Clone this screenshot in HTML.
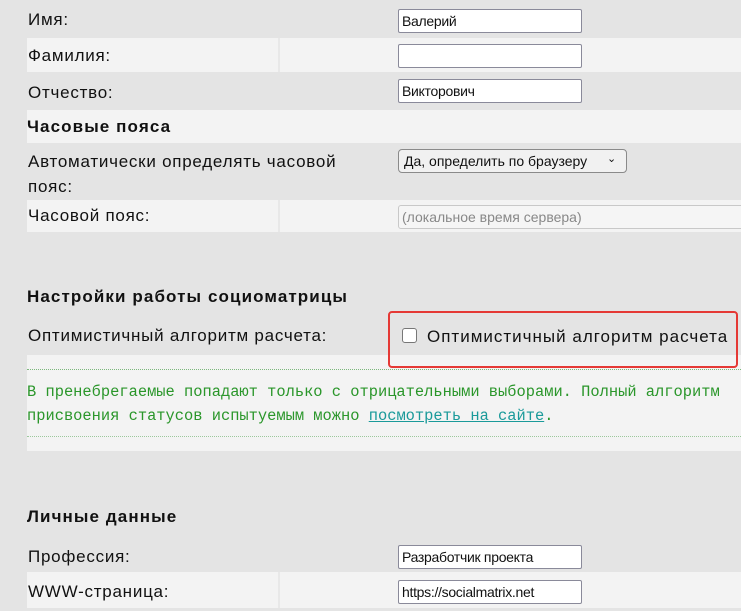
<!DOCTYPE html>
<html><head><meta charset="utf-8"><style>
*{margin:0;padding:0;box-sizing:border-box}
body{width:741px;height:611px;overflow:hidden;background:#e4e4e4;font-family:"Liberation Sans",sans-serif;color:#111;position:relative}
div,span{position:absolute}
.lt{background:#f3f3f3}
.lbl{font-size:17px;letter-spacing:0.75px;left:28px;white-space:nowrap}
.h{font-size:17px;font-weight:bold;left:27px;white-space:nowrap;letter-spacing:1.1px}
.in{left:398px;width:184px;height:24px;background:#fff;border:1px solid #8a8a9a;border-radius:2px;font-size:14px;padding:3px 3px;letter-spacing:-0.3px;white-space:nowrap}
.sep{width:2px;left:278px;background:#e8e8e8}
</style></head><body>
<div class="lbl" style="top:10px">Имя:</div>
<div class="in" style="top:9px">Валерий</div>

<div class="lt" style="left:27px;top:38px;width:714px;height:34px"></div>
<div class="sep" style="top:38px;height:34px"></div>
<div class="lbl" style="top:46px">Фамилия:</div>
<div class="in" style="top:44px"></div>

<div class="lbl" style="top:83px">Отчество:</div>
<div class="in" style="top:79px">Викторович</div>

<div class="lt" style="left:27px;top:110px;width:714px;height:33px"></div>
<div class="h" style="top:117px">Часовые пояса</div>

<div class="lbl" style="top:149px;line-height:25px">Автоматически определять часовой<br>пояс:</div>
<div style="left:398px;top:149px;width:229px;height:24px;background:#f1f1f1;border:1px solid #8a8a8a;border-radius:4px;font-size:14px;padding:3px 5px;white-space:nowrap">Да, определить по браузеру<span style="left:208px;top:2px;font-size:11px">&#8964;</span></div>

<div class="lt" style="left:27px;top:200px;width:714px;height:32px"></div>
<div class="sep" style="top:200px;height:32px"></div>
<div class="lbl" style="top:206px">Часовой пояс:</div>
<div style="left:398px;top:205px;width:350px;height:24px;background:#f5f5f5;border:1px solid #c8c8c8;border-radius:3px;font-size:14px;padding:3px 3px;color:#888;white-space:nowrap">(локальное время сервера)</div>

<div class="h" style="top:292px;transform:translateY(-5px)">Настройки работы социоматрицы</div>
<div class="lbl" style="top:326px">Оптимистичный алгоритм расчета:</div>

<div class="lt" style="left:27px;top:355px;width:714px;height:96px"></div>
<div style="left:27px;top:369px;width:714px;border-top:1px dotted #7cb87c"></div>
<div style="left:27px;top:436px;width:714px;border-top:1px dotted #9cc89c"></div>
<div style="left:27px;top:380px;font-family:'Liberation Mono',monospace;font-size:15.4px;color:#2a962a;line-height:24px;white-space:nowrap">В пренебрегаемые попадают только с отрицательными выборами. Полный алгоритм<br>присвоения статусов испытуемым можно <span style="position:static;color:#1a9a9a;text-decoration:underline">посмотреть на сайте</span>.</div>

<div style="left:388px;top:311px;width:350px;height:57px;border:2px solid #e53935;border-radius:4px"></div>
<div style="left:402px;top:328px;width:15px;height:15px;background:#fff;border:1px solid #777;border-radius:3px"></div>
<div style="left:427px;top:327px;font-size:17px;letter-spacing:1px;white-space:nowrap">Оптимистичный алгоритм расчета</div>

<div class="h" style="top:507px">Личные данные</div>
<div class="lbl" style="top:547px">Профессия:</div>
<div class="in" style="top:545px">Разработчик проекта</div>

<div class="lt" style="left:27px;top:572px;width:714px;height:36px"></div>
<div class="sep" style="top:572px;height:36px"></div>
<div class="lbl" style="top:582px">WWW-страница:</div>
<div class="in" style="top:580px">https://socialmatrix.net</div>
</body></html>
